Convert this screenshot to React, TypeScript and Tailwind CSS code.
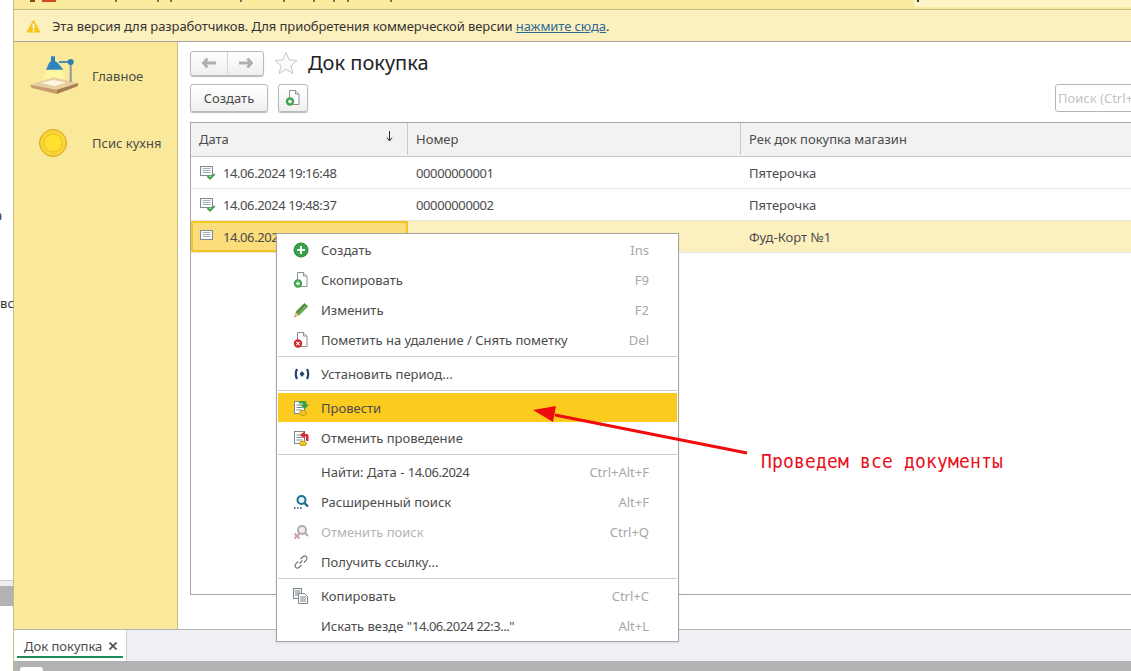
import React from "react";

const F = { fontFamily: '"Noto Sans", "Open Sans", sans-serif' };

const DocIcon = ({ check }: { check?: boolean }) => (
  <svg width="17" height="16" viewBox="0 0 17 16" className="shrink-0">
    <rect x="1.5" y="1.5" width="12" height="9" fill="#fbfcfd" stroke="#7c8a90" />
    <path d="M3.500 3.500h8M3.500 5.500h8M3.500 7.500h8" stroke="#a4aeb3" />
    {check && <path d="M8.5 11l2.500 2.500 4.500-4.500" fill="none" stroke="#3fa142" strokeWidth="2" />}
  </svg>
);

const Page = ({ badge }: { badge: "plus" | "x" }) => (
  <svg width="16" height="16" viewBox="0 0 16 16">
    <path d="M4.5 0.500h6l3.500 3.500v10.500h-9.500z" fill="#fff" stroke="#8a8f94" />
    <path d="M10.500 0.500v3.500h3.500" fill="#e8e8e8" stroke="#8a8f94" />
    {badge === "plus" ? (
      <>
        <circle cx="5" cy="11.500" r="4.200" fill="#3fa34d" />
        <path d="M3 11.500h4M5 9.500v4" stroke="#fff" strokeWidth="1.300" />
      </>
    ) : (
      <>
        <circle cx="5" cy="11.500" r="4.200" fill="#d3232e" />
        <path d="M3.400 9.900l3.200 3.200M6.600 9.900l-3.200 3.200" stroke="#fff" strokeWidth="1.200" />
      </>
    )}
  </svg>
);

const Icons: Record<string, React.ReactNode> = {
  create: (
    <svg width="16" height="16" viewBox="0 0 16 16">
      <circle cx="8" cy="8" r="7" fill="#35a447" stroke="#23843a" />
      <path d="M4 8h8M8 4v8" stroke="#fff" strokeWidth="2" />
    </svg>
  ),
  copy: <Page badge="plus" />,
  edit: (
    <svg width="16" height="16" viewBox="0 0 16 16">
      <path d="M11.500 1l3.500 3.500-9 9-3.500-3.500z" fill="#4b8f3d" />
      <path d="M12 3.500l1.500 1.500-8 8-1-1z" fill="#77b35c" />
      <path d="M2.500 10l3.500 3.500-4.500 1.500z" fill="#e6b877" />
      <path d="M1.200 15.300l1.500-.5-1-1z" fill="#444" />
    </svg>
  ),
  del: <Page badge="x" />,
  period: (
    <svg width="18" height="16" viewBox="0 0 18 16">
      <path d="M4 3Q1.500 8 4 13M14 3q2.500 5 0 10" fill="none" stroke="#23466e" strokeWidth="2.200" />
      <path d="M9 5l2.500 3L9 11 6.500 8z" fill="#23466e" />
    </svg>
  ),
  post: (
    <svg width="16" height="16" viewBox="0 0 16 16">
      <rect x="1.500" y="1.500" width="10" height="12" fill="#fff" stroke="#7c8a90" />
      <path d="M3.500 5h6M3.500 7.500h6M3.500 10h6" stroke="#7c8a90" />
      <path d="M6 1h6q1.500 0 1.500 2v1.500H16L11.500 9.500 7.500 4.500h2.500V3.500H6z" fill="#35a447" />
      <ellipse cx="10" cy="13" rx="3.500" ry="2.500" fill="#f0c42b" stroke="#c99c12" />
    </svg>
  ),
  unpost: (
    <svg width="16" height="16" viewBox="0 0 16 16">
      <rect x="1.500" y="1.500" width="10" height="12" fill="#fff" stroke="#7c8a90" />
      <path d="M3.500 5h6M3.500 7.500h6M3.500 10h6" stroke="#7c8a90" />
      <path d="M15.500 11V5.500q0-1.500-1.500-1.500h-2V1L7 5l5 4V6.500h1V11z" fill="#d3303a" />
      <ellipse cx="10" cy="13.500" rx="3.500" ry="2.300" fill="#f0c42b" stroke="#c99c12" />
    </svg>
  ),
  search: (
    <svg width="16" height="16" viewBox="0 0 16 16">
      <circle cx="8.500" cy="6" r="4" fill="#e4f2f7" stroke="#1c6f8e" strokeWidth="2" />
      <path d="M11.500 9l3.500 3.500" stroke="#1c6f8e" strokeWidth="2.400" />
      <path d="M1 14h1.500M4 14h1.500M7 14h1.500" stroke="#23466e" strokeWidth="1.500" />
    </svg>
  ),
  cancel: (
    <svg width="16" height="16" viewBox="0 0 16 16">
      <circle cx="9" cy="6" r="4" fill="#f3eeee" stroke="#b5adad" strokeWidth="2" />
      <path d="M12 9l3 3" stroke="#b5adad" strokeWidth="2.200" />
      <path d="M1.500 9.500l5 5M6.500 9.500l-5 5" stroke="#c9a5a5" strokeWidth="2" />
    </svg>
  ),
  link: (
    <svg width="16" height="16" viewBox="0 0 16 16" fill="none" stroke="#6c7074" strokeWidth="1.100">
      <path d="M6.500 9.500l3-3" />
      <path d="M7.500 5l2.500-2.500a2.500 2.500 0 0 1 3.500 3.500L11 8.500" />
      <path d="M8.500 11L6 13.500A2.500 2.500 0 0 1 2.500 10L5 7.500" />
    </svg>
  ),
  clip: (
    <svg width="16" height="16" viewBox="0 0 16 16" stroke="#7c8a90" fill="#f2f4f6">
      <rect x="0.500" y="0.500" width="8" height="10" />
      <path d="M2 3h5M2 5h5M2 7h5" />
      <path d="M5.500 5.500h6l3 3v7h-9z" fill="#fff" />
      <path d="M7 9h6M7 11h6M7 13h6" />
    </svg>
  ),
};

type Item =
  | { sep: true }
  | {
      sep?: false;
      icon?: string;
      label: string;
      num?: string;
      key2?: string;
      active?: boolean;
      disabled?: boolean;
    };

const menu: Item[] = [
  { icon: "create", label: "Создать", key2: "Ins" },
  { icon: "copy", label: "Скопировать", key2: "F9" },
  { icon: "edit", label: "Изменить", key2: "F2" },
  { icon: "del", label: "Пометить на удаление / Снять пометку", key2: "Del" },
  { sep: true },
  { icon: "period", label: "Установить период..." },
  { sep: true },
  { icon: "post", label: "Провести", active: true },
  { icon: "unpost", label: "Отменить проведение" },
  { sep: true },
  { label: "Найти: Дата - ", num: "14.06.2024", key2: "Ctrl+Alt+F" },
  { icon: "search", label: "Расширенный поиск", key2: "Alt+F" },
  { icon: "cancel", label: "Отменить поиск", key2: "Ctrl+Q", disabled: true },
  { icon: "link", label: "Получить ссылку..." },
  { sep: true },
  { icon: "clip", label: "Копировать", key2: "Ctrl+C" },
  { label: 'Искать везде "', num: '14.06.2024 22:3..."', key2: "Alt+L" },
];

const rows = [
  { d: "14.06.2024 19:16:48", n: "00000000001", s: "Пятерочка", check: true },
  { d: "14.06.2024 19:48:37", n: "00000000002", s: "Пятерочка", check: true },
  { d: "14.06.2024 22:30:11", n: "00000000003", s: "Фуд-Корт №1", sel: true },
];

const ticks = [101, 143, 156, 226, 269, 299, 319, 333, 376];

const btn =
  "h-[28px] rounded-[3px] border border-[#b9b9b9] bg-gradient-to-b from-white to-[#f0f0f0] shadow-[0_1px_1px_#bbb] flex items-center justify-center";

export default function App() {
  return (
    <div
      style={F}
      className="relative w-[1131px] h-[671px] overflow-hidden bg-white flex text-[13px] text-[#4b4b4b] leading-[18px]"
    >
      {/* desktop strip on the left */}
      <div className="relative w-[13px] shrink-0 bg-white border-r border-[#c9bc80] box-content">
        <span className="absolute left-[-5px] top-[206px] text-[#333]">а</span>
        <span className="absolute left-[-6px] top-[294px] text-[#333] whitespace-nowrap">твс</span>
        <div className="absolute left-0 top-[580px] w-full h-[6px] bg-[#eee] border-t border-[#ccc]" />
        <div className="absolute left-0 top-[586px] w-full h-[20px] bg-[#b2b2b2]" />
      </div>

      <div className="flex-1 min-w-0 flex flex-col">
        {/* cropped title bar */}
        <div className="h-[10px] shrink-0 bg-[#faeb9f] border-b border-[#c9bc80] flex relative overflow-hidden">
          <div className="absolute left-[28px] top-0 w-[14px] h-[2px] bg-[#d24a1c]" />
          <div className="absolute left-[16px] top-0 w-[5px] h-[2px] bg-[#8a4a1c]" />
          {ticks.map((x) => (
            <div key={x} className="absolute top-0 w-[2px] h-[2px] bg-[#77705a]" style={{ left: x }} />
          ))}
          <div className="ml-auto mr-0 w-[217px] h-[7px] bg-[#fdf4c8] rounded-bl-[3px] relative">
            <div className="absolute left-[3px] top-0 w-[2px] h-[2px] bg-[#333]" />
          </div>
        </div>

        {/* banner */}
        <div className="h-[32px] shrink-0 bg-[#fdf0bf] border-b border-[#a6a6a6] flex items-center pl-[12px] text-[#333] tracking-[-0.08px]">
          <svg width="15" height="14" viewBox="0 0 15 14" className="mr-[11px]">
            <path d="M7.500 0.500L14.800 13.500H0.200z" fill="#f3c51f" />
            <path d="M7.500 4.500v5M7.500 10.500v2" stroke="#fff" strokeWidth="1.600" />
          </svg>
          <span>
            Эта версия для разработчиков. Для приобретения коммерческой версии{" "}
            <span className="underline text-[#2a6a96]">нажмите сюда</span>.
          </span>
        </div>

        <div className="flex-1 min-h-0 flex">
          {/* sidebar */}
          <aside className="w-[164px] shrink-0 bg-[#fbe99b] border-r border-[#c9bc80] flex flex-col">
            <div className="h-[67px] flex items-center pl-[15px] gap-[13px]">
              <svg width="50" height="44" viewBox="0 0 50 44">
                <path d="M18 15h14l5 12H14z" fill="#fff6a0" />
                <path d="M1 30.700L24.300 23.300 49.300 29 27.700 35.700z" fill="#e8cfa0" />
                <path d="M12 29l12-3 13 2.500-11 3.500z" fill="#fdf6e0" />
                <path d="M1 30.700l1.700 3.300 25 6v-4.300z" fill="#c89c6c" />
                <path d="M27.700 40l21-7.700.6-3.300-21.600 6.700z" fill="#a87f55" />
                <path d="M41.700 8v20" stroke="#8a979c" strokeWidth="2" />
                <path d="M30 8h11" stroke="#4a8fb5" strokeWidth="2" />
                <circle cx="41.700" cy="8" r="3" fill="#2f7fb0" />
                <path d="M22 2.300h4V7l3 2 5.300 6.700H17L20 9l2-2z" fill="#2f84c0" />
              </svg>
              <span>Главное</span>
            </div>
            <div className="h-[67px] flex items-center pl-[25px] gap-[25px]">
              <svg width="28" height="28" viewBox="0 0 28 28">
                <circle cx="14" cy="14" r="13.500" fill="#f9d33a" stroke="#d6a21c" />
                <circle cx="14" cy="14" r="9" fill="#ffe22e" stroke="#efc023" />
              </svg>
              <span>Псис кухня</span>
            </div>
          </aside>

          {/* main */}
          <main className="flex-1 min-w-0 bg-white pl-[12px] pt-[8px] flex flex-col pb-[34px]">
            <div className="h-[26px] flex items-center shrink-0">
              <div className="h-[25px] w-[74px] rounded-[3px] border border-[#b9b9b9] bg-gradient-to-b from-white to-[#efefef] shadow-[0_1px_1px_#bbb] flex">
                <div className="w-[37px] flex items-center justify-center border-r border-[#d5d5d5]">
                  <svg width="14" height="10" viewBox="0 0 14 10">
                    <path d="M5.500 0.500L1.500 5l4 4.500M2 5H14" fill="none" stroke="#adb0b2" strokeWidth="2.800" />
                  </svg>
                </div>
                <div className="flex-1 flex items-center justify-center">
                  <svg width="14" height="10" viewBox="0 0 14 10">
                    <path d="M8.500 0.500l4 4.500-4 4.500M12 5H0" fill="none" stroke="#adb0b2" strokeWidth="2.800" />
                  </svg>
                </div>
              </div>
              <svg width="24" height="24" viewBox="0 0 24 24" className="ml-[10px]">
                <path
                  d="M12 1.500l3.100 7.300 7.900.7-6 5.200 1.800 7.800L12 18.300l-6.800 4.200L7 14.700l-6-5.200 7.900-.7z"
                  fill="#fafafa"
                  stroke="#c7c7c7"
                />
              </svg>
              <span className="ml-[10px] text-[20px] text-[#222] leading-[26px]">Док покупка</span>
              <div className="flex-1" />
            </div>

            <div className="h-[28px] mt-[8px] flex items-center gap-[10px] shrink-0">
              <div className={`${btn} w-[78px]`}>Создать</div>
              <div className={`${btn} w-[30px]`}>
                <Page badge="plus" />
              </div>
              <div className="flex-1" />
              <div className="w-[90px] h-[28px] mr-[-14px] rounded-[3px] border border-[#b5b5b5] flex items-center pl-[2px] text-[#c4c4c4] whitespace-nowrap overflow-hidden">
                Поиск (Ctrl+F)
              </div>
            </div>

            {/* table */}
            <div className="flex-1 mt-[10px] mr-[-14px] border border-[#a6a6a6] flex flex-col min-h-0">
              <div className="h-[34px] shrink-0 flex bg-[#f2f2f2] border-b border-[#c8c8c8] items-stretch pb-[1px]">
                <div className="w-[217px] pl-[8px] border-r border-[#c8c8c8] flex items-center justify-between pr-[14px]">
                  <span>Дата</span>
                  <svg width="7" height="11" viewBox="0 0 7 11" className="mt-[-5px]">
                    <path d="M3.500 0v9M1 6.500l2.500 3.500L6 6.500" fill="none" stroke="#333" />
                  </svg>
                </div>
                <div className="w-[333px] pl-[8px] border-r border-[#c8c8c8] flex items-center">Номер</div>
                <div className="flex-1 pl-[8px] flex items-center">Рек док покупка магазин</div>
              </div>
              {rows.map((r) => (
                <div
                  key={r.d}
                  className={`h-[32px] shrink-0 flex border-b border-[#e5e5e5] ${r.sel ? "bg-[#fdf0bf]" : ""}`}
                >
                  <div
                    className={`w-[217px] flex items-center gap-[7px] ${
                      r.sel ? "bg-[#fbdd7c] border-2 border-[#f3c51f] pl-[6px] rounded-[1px]" : "pl-[8px]"
                    }`}
                  >
                    <DocIcon check={r.check} />
                    <span className="tracking-[-0.42px]">{r.d}</span>
                  </div>
                  <div className="w-[333px] pl-[8px] flex items-center tracking-[-0.38px]">{r.n}</div>
                  <div className="flex-1 pl-[8px] flex items-center">{r.s}</div>
                </div>
              ))}
            </div>
          </main>
        </div>

        {/* open-tabs bar */}
        <div className="h-[32px] shrink-0 bg-[#f0f0f4] border-t border-[#b5b5b5] flex">
          <div className="w-[113px] bg-white border-r border-[#d0d0d0] pl-[10px] relative flex items-center gap-[7px]">
            <span>Док покупка</span>
            <svg width="8" height="8" viewBox="0 0 8 8">
              <path d="M0.500 0.500l7 7M7.500 0.500l-7 7" stroke="#4b4b4b" strokeWidth="1.600" />
            </svg>
            <div className="absolute left-[3px] right-[3px] bottom-[3px] h-[2px] bg-[#1f8a5a]" />
          </div>
        </div>

        {/* status */}
        <div className="h-[10px] shrink-0 bg-[#b2b2b2] pl-[6px] overflow-hidden pt-[6px]">
          <div className="w-[23px] h-[4px] bg-white rounded-t-[3px]" />
        </div>
      </div>

      {/* context menu */}
      <div className="absolute left-[276px] top-[233px] w-[403px] h-[409px] bg-white border border-[#a6a6a6] pt-[1px] px-[1px] flex flex-col shadow-[0_1px_2px_rgba(0,0,0,.1)]">
        {menu.map((m, i) =>
          m.sep ? (
            <div key={i} className="h-[4px] shrink-0 pt-[1px]">
              <div className="w-full h-[1px] bg-[#cfcfcf]" />
            </div>
          ) : (
            <div
              key={i}
              className={`shrink-0 flex items-center pl-[15px] pr-[28px] ${
                m.active ? "h-[29px] pt-[1px] mb-[1px] bg-[#fbcb1f]" : "h-[30px]"
              } ${m.disabled ? "text-[#b4b4b4]" : ""}`}
            >
              <div className="w-[28px] shrink-0 flex items-center mt-[-1px]">{m.icon ? Icons[m.icon] : null}</div>
              <span className="flex-1 whitespace-pre">
                {m.label}
                {m.num && <span className="tracking-[-0.5px]">{m.num}</span>}
              </span>
              {m.key2 && <span className="text-[#a8a8a8]">{m.key2}</span>}
            </div>
          ),
        )}
      </div>

      {/* annotation arrow */}
      <svg className="absolute left-[530px] top-[400px] pointer-events-none" width="225" height="60" viewBox="0 0 225 60">
        <path d="M217 53L25 15" stroke="#ee0c0c" strokeWidth="3" />
        <path d="M3 10L26 6 23 22z" fill="#ee0c0c" />
      </svg>
      <span className="absolute left-[761px] top-[450px] text-[18px] leading-[22px] tracking-[0.16px] scale-y-[1.12] text-[#e8101c] whitespace-nowrap [font-family:'DejaVu_Sans_Mono',monospace]">
        Проведем все документы
      </span>
    </div>
  );
}
